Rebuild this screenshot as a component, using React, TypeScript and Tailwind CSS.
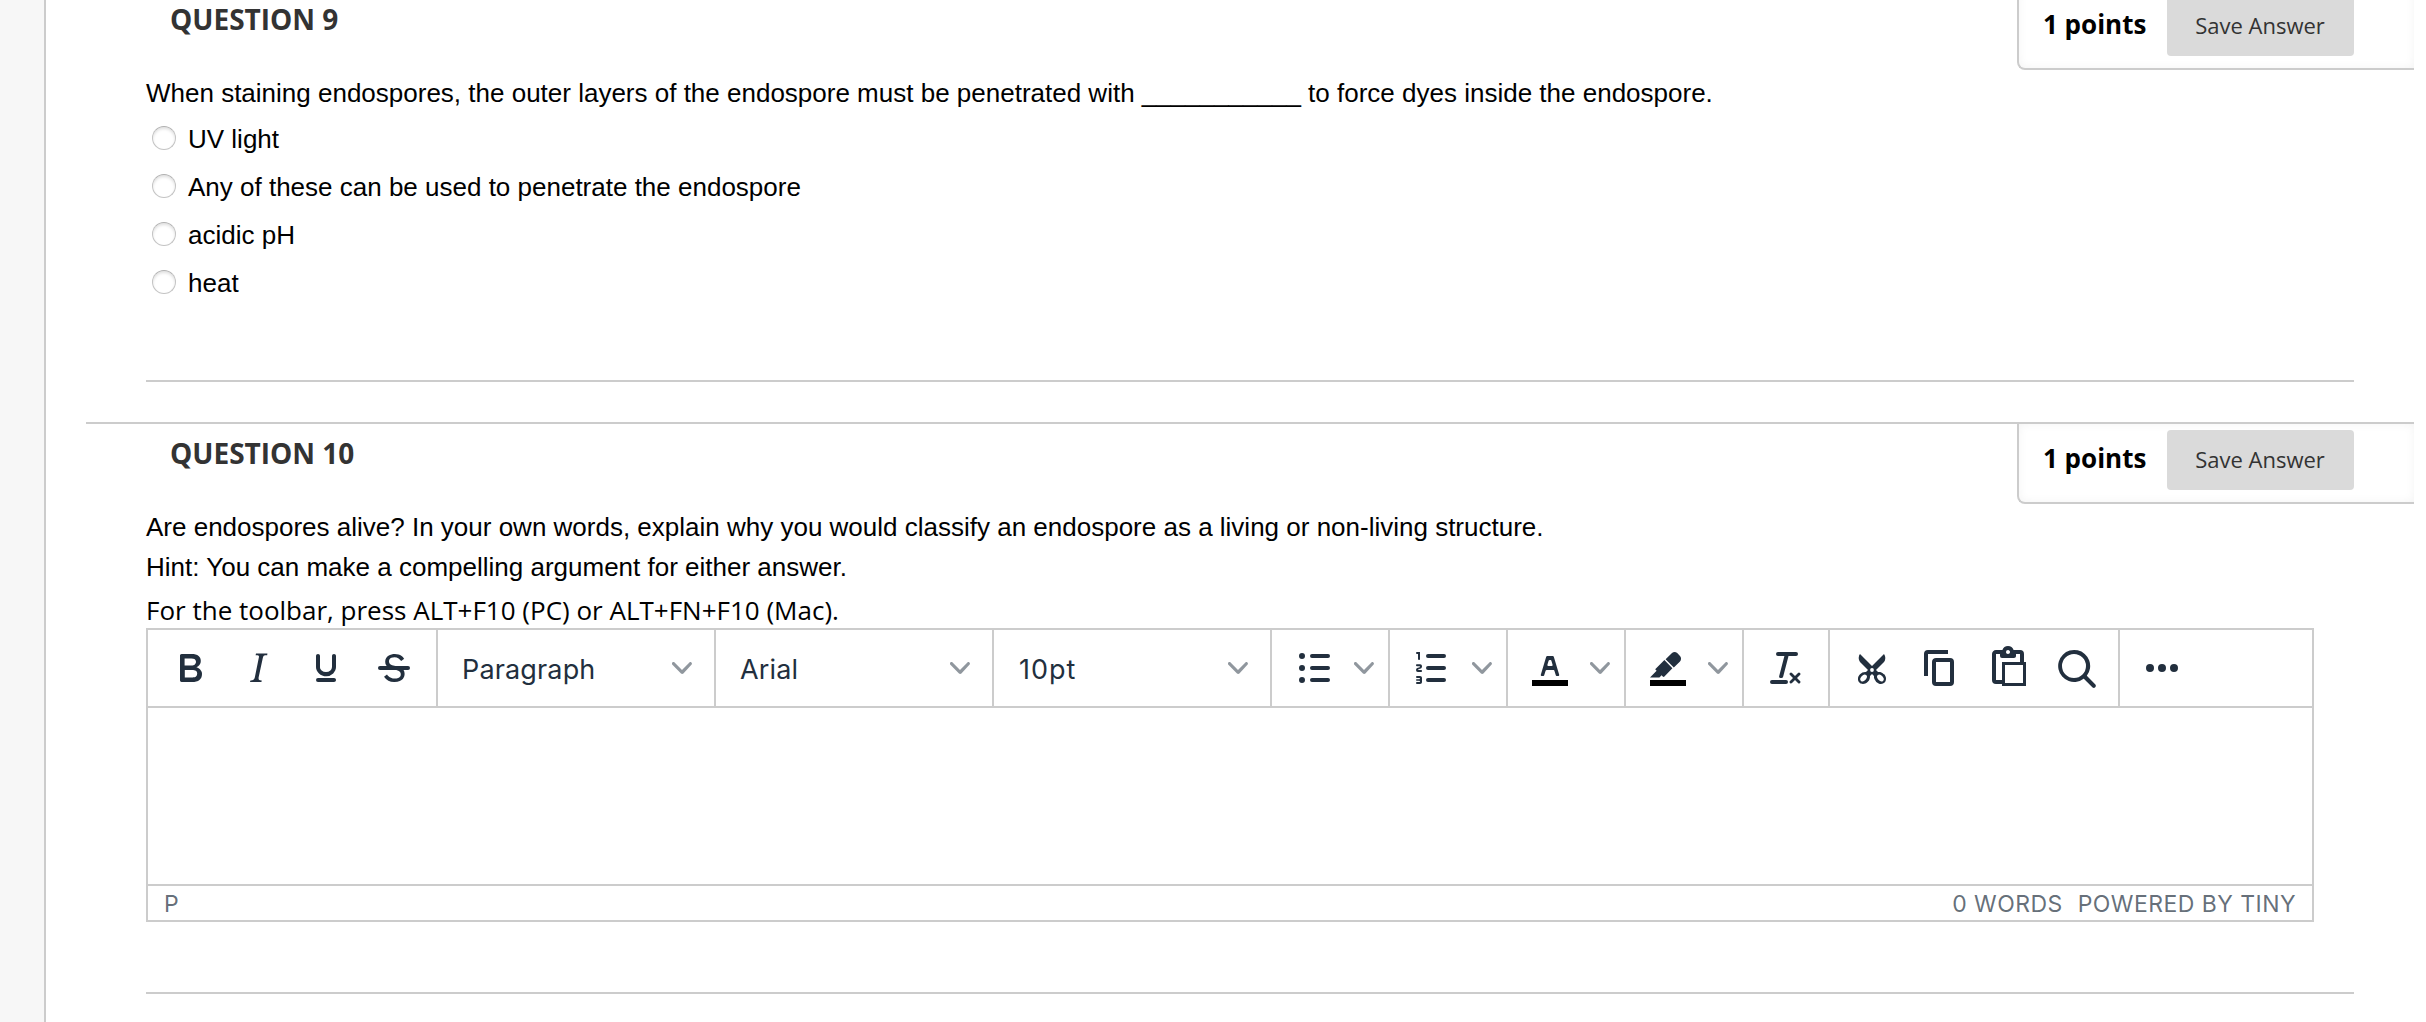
import React, { ReactNode } from 'react';

const ICONS = {
  bold: 'M7.8 19c-.3 0-.5 0-.6-.2l-.2-.5V5.7c0-.2 0-.4.2-.5l.6-.2h5c1.5 0 2.7.3 3.5 1 .7.6 1.1 1.4 1.1 2.5a3 3 0 0 1-.6 1.9c-.4.6-1 1-1.6 1.2.4.1.9.3 1.3.6s.8.7 1 1.2c.4.4.5 1 .5 1.6 0 1.3-.4 2.3-1.3 3-.8.7-2.1 1-3.8 1H7.8Zm5-8.3c.6 0 1.2-.1 1.6-.5.4-.3.6-.7.6-1.3 0-1.1-.8-1.7-2.3-1.7H9.3v3.5h3.4Zm.5 6c.7 0 1.3-.1 1.7-.4.4-.4.6-.9.6-1.5s-.2-1-.7-1.4c-.4-.3-1-.4-2-.4H9.4v3.8h4Z',
  italic: 'm16.7 4.7-.1.9h-.3c-.6 0-1 0-1.4.3-.3.3-.4.6-.5 1.1l-2.1 9.8v.6c0 .5.4.8 1.4.8h.2l-.2.8H8l.2-.8h.2c1.1 0 1.8-.5 2-1.5l2-9.8.1-.5c0-.6-.4-.8-1.4-.8h-.3l.2-.9h5.8Z',
  underline: 'M16 5c.6 0 1 .4 1 1v5.5a4 4 0 0 1-.4 1.8l-1 1.4a5.3 5.3 0 0 1-5.5 1 5 5 0 0 1-1.6-1c-.5-.4-.8-.9-1.1-1.4a4 4 0 0 1-.4-1.8V6c0-.6.4-1 1-1s1 .4 1 1v5.5c0 .3 0 .6.2 1l.6.7a3.3 3.3 0 0 0 2.2.8 3.4 3.4 0 0 0 2.2-.8c.3-.2.4-.5.6-.8l.2-.9V6c0-.6.4-1 1-1ZM8 17h8c.6 0 1 .4 1 1s-.4 1-1 1H8a1 1 0 0 1 0-2Z',
  removeFormat: 'M13.2 6a1 1 0 0 1 0 .2l-2.6 10a1 1 0 0 1-1 .8h-.2a.8.8 0 0 1-.8-1l2.6-10H8a1 1 0 1 1 0-2h9a1 1 0 0 1 0 2h-3.8ZM5 18h7a1 1 0 0 1 0 2H5a1 1 0 0 1 0-2Zm13 1.5L16.5 18 15 19.5a.7.7 0 0 1-1-1l1.5-1.5-1.5-1.5a.7.7 0 0 1 1-1l1.5 1.5 1.5-1.5a.7.7 0 0 1 1 1L17.5 17l1.5 1.5a.7.7 0 0 1-1 1Z',
  copy: 'M16 3H6a2 2 0 0 0-2 2v11h2V5h10V3Zm1 4a2 2 0 0 1 2 2v10a2 2 0 0 1-2 2h-7a2 2 0 0 1-2-2V9c0-1.2.9-2 2-2h7Zm0 12V9h-7v10h7Z',
  paste: 'M18 9V5h-2v1c0 .6-.4 1-1 1H9a1 1 0 0 1-1-1V5H6v13h3V9h9ZM9 20H6a2 2 0 0 1-2-2V5c0-1.1.9-2 2-2h3.2A3 3 0 0 1 12 1a3 3 0 0 1 2.8 2H18a2 2 0 0 1 2 2v4h1v12H9v-1Zm1.5-9.5v9h9v-9h-9ZM12 3a1 1 0 0 0-1 1c0 .5.4 1 1 1s1-.5 1-1-.4-1-1-1Z',
  search: 'M16 17.3a8 8 0 1 1 1.4-1.4l4.3 4.4a1 1 0 0 1-1.4 1.4l-4.4-4.3Zm-5-.3a6 6 0 1 0 0-12 6 6 0 0 0 0 12Z',
  more: 'M6 10a2 2 0 1 0 0 4 2 2 0 0 0 0-4Zm12 0a2 2 0 1 0 0 4 2 2 0 0 0 0-4Zm-6 0a2 2 0 1 0 0 4 2 2 0 0 0 0-4Z',
  bullets: 'M11 5h8a1 1 0 0 1 0 2h-8a1 1 0 0 1 0-2Zm0 6h8a1 1 0 0 1 0 2h-8a1 1 0 0 1 0-2Zm0 6h8a1 1 0 0 1 0 2h-8a1 1 0 0 1 0-2ZM4.5 6a1.5 1.5 0 1 1 3 0 1.5 1.5 0 0 1-3 0Zm0 6a1.5 1.5 0 1 1 3 0 1.5 1.5 0 0 1-3 0Zm0 6a1.5 1.5 0 1 1 3 0 1.5 1.5 0 0 1-3 0Z',
  numbers: 'M10 17h8a1 1 0 0 1 0 2h-8a1 1 0 0 1 0-2Zm0-6h8a1 1 0 0 1 0 2h-8a1 1 0 0 1 0-2Zm0-6h8a1 1 0 0 1 0 2h-8a1 1 0 1 1 0-2ZM6 4v3.5c0 .3-.2.5-.5.5a.5.5 0 0 1-.5-.5V5h-.5a.5.5 0 0 1 0-1H6Zm-1 8.8.2.2h1.3c.3 0 .5.2.5.5s-.2.5-.5.5H4.9a1 1 0 0 1-.9-1V13c0-.4.3-.8.6-1l1.2-.4.2-.3a.2.2 0 0 0-.2-.2H4.5a.5.5 0 0 1-.5-.5c0-.3.2-.5.5-.5h1.6c.5 0 .9.4.9 1v.1c0 .4-.3.8-.6 1l-1.2.4-.2.3ZM7 17v2c0 .6-.4 1-1 1H4.5a.5.5 0 0 1 0-1h1.2c.2 0 .3-.1.3-.3 0-.2-.1-.3-.3-.3H4.4a.4.4 0 1 1 0-.8h1.3c.2 0 .3-.1.3-.3 0-.2-.1-.3-.3-.3H4.5a.5.5 0 1 1 0-1H6c.6 0 1 .4 1 1Z',
};

function Icon({ d, children }: { d?: string; children?: ReactNode }) {
  return (
    <svg viewBox="0 0 24 24" className="h-12 w-12 shrink-0 fill-[#222f3e]">
      {d && <path d={d} fillRule="evenodd" />}
      {children}
    </svg>
  );
}

function Chevron() {
  return (
    <svg viewBox="0 0 10 10" className="h-5 w-5 shrink-0 fill-[#222f3e]/50">
      <path d="M8.7 2.2c.3-.3.8-.3 1 0 .4.4.4.9 0 1.2L5.7 7.8c-.3.3-.9.3-1.2 0L.2 3.4a.8.8 0 0 1 0-1.2c.3-.3.8-.3 1.1 0L5 6l3.7-3.8Z" />
    </svg>
  );
}

function Group({ children, last }: { children: ReactNode; last?: boolean }) {
  return (
    <div className={`flex h-full shrink-0 items-center px-2 ${last ? '' : 'border-r-2 border-[#ccc]'}`}>
      {children}
    </div>
  );
}

function ToolButton({ children }: { children: ReactNode }) {
  return <button className="flex h-17 w-[68px] items-center justify-center">{children}</button>;
}

function SplitButton({ children }: { children: ReactNode }) {
  return (
    <Group>
      <ToolButton>{children}</ToolButton>
      <button className="flex h-17 w-8 items-center justify-center">
        <Chevron />
      </button>
    </Group>
  );
}

function Select({ label, wide }: { label: string; wide?: boolean }) {
  return (
    <Group>
      <button className="flex h-17 w-[260px] items-center justify-between pr-3.5 pl-4 text-[27px] text-[#222f3e]">
        <span className={`pt-1 ${wide ? 'pl-px tracking-[1px]' : 'tracking-[0.15px]'}`}>{label}</span>
        <Chevron />
      </button>
    </Group>
  );
}

function Editor() {
  return (
    <div className="mr-[40px] flex h-[294px] flex-col border-2 border-[#ccc] font-['Inter',sans-serif]">
      <div className="flex h-[78px] shrink-0 items-center border-b-2 border-[#ccc]">
        <Group>
          <ToolButton><Icon d={ICONS.bold} /></ToolButton>
          <ToolButton><Icon d={ICONS.italic} /></ToolButton>
          <ToolButton><Icon d={ICONS.underline} /></ToolButton>
          <ToolButton>
            <Icon>
              <path d="M15.6 8.5c-.5-.7-1-1.1-1.3-1.3-.6-.4-1.3-.6-2-.6-2.7 0-2.8 1.7-2.8 2.1 0 1.6 1.8 2 3.2 2.3 4.4.9 4.6 2.8 4.6 3.9 0 1.4-.7 4.1-5 4.1A6.2 6.2 0 0 1 7 16.4l1.5-1.1c.4.6 1.6 2 3.7 2 1.6 0 2.5-.4 3-1.2.4-.8.3-2-.8-2.6-.7-.4-1.6-.7-2.9-1-1-.2-3.9-.8-3.9-3.6C7.6 6 10.3 5 12.4 5c2.9 0 4.2 1.6 4.7 2.4l-1.5 1.1Z" />
              <path d="M5 11h14a1 1 0 0 1 0 2H5a1 1 0 0 1 0-2Z" />
            </Icon>
          </ToolButton>
        </Group>
        <Select label="Paragraph" />
        <Select label="Arial" />
        <Select label="10pt" wide />
        <SplitButton><Icon d={ICONS.bullets} /></SplitButton>
        <SplitButton><Icon d={ICONS.numbers} /></SplitButton>
        <SplitButton>
          <Icon>
            <path d="M3 18h18v3H3z" className="fill-black" />
            <path d="M8.7 16h-.8a.5.5 0 0 1-.5-.6l2.7-9c.1-.3.3-.4.5-.4h2.8c.2 0 .4.1.5.4l2.7 9a.5.5 0 0 1-.5.6h-.8a.5.5 0 0 1-.4-.4l-.7-2.2c0-.3-.3-.4-.5-.4h-3.4c-.2 0-.4.1-.5.4l-.7 2.2c0 .3-.2.4-.4.4Zm2.6-7.6-.6 2a.5.5 0 0 0 .5.6h1.6a.5.5 0 0 0 .5-.6l-.6-2c0-.3-.3-.4-.5-.4h-.4c-.2 0-.4.1-.5.4Z" />
          </Icon>
        </SplitButton>
        <SplitButton>
          <Icon>
            <path d="M3 18h18v3H3z" className="fill-black" />
            <path d="M7.7 16.7H3l3.3-3.3-.7-.8L10.2 8l4 4.1-4 4.2c-.2.2-.6.2-.8 0l-.6-.7-1.1 1.1Zm7.2-5L10.8 7.6l3.2-3.1a2 2 0 0 1 2.6 0L18 6c.7.7.7 2 0 2.7l-3.1 3Z" />
          </Icon>
        </SplitButton>
        <Group>
          <ToolButton><Icon d={ICONS.removeFormat} /></ToolButton>
        </Group>
        <Group>
          <ToolButton>
            <Icon>
              <path d="M18 15c.6.7 1 1.4 1 2.3 0 .8-.2 1.5-.7 2l-.8.5-1 .2c-.4 0-.8 0-1.2-.3a3.9 3.9 0 0 1-2.1-2.2c-.2-.5-.3-1-.2-1.5l-1-1-1 1c0 .5 0 1-.2 1.5-.1.5-.4 1-.9 1.4-.3.4-.7.6-1.2.8l-1.2.3c-.4 0-.7 0-1-.2-.3 0-.6-.3-.8-.5-.5-.5-.8-1.2-.7-2 0-.9.4-1.6 1-2.2A3.7 3.7 0 0 1 8.6 14H9l1-1-4-4-.5-1a3.3 3.3 0 0 1 0-2c0-.4.3-.7.5-1l6 6 6-6 .5 1a3.3 3.3 0 0 1 0 2c0 .4-.3.7-.5 1l-4 4 1 1h.5c.4 0 .8 0 1.2.3.5.2.9.4 1.2.8Z" />
              <g className="fill-white">
                <ellipse cx="7.8" cy="17" rx="1.3" ry="1.95" transform="rotate(42 7.8 17)" />
                <ellipse cx="16.2" cy="17" rx="1.3" ry="1.95" transform="rotate(-42 16.2 17)" />
                <circle cx="12" cy="13" r=".95" />
              </g>
            </Icon>
          </ToolButton>
          <ToolButton><Icon d={ICONS.copy} /></ToolButton>
          <ToolButton><Icon d={ICONS.paste} /></ToolButton>
          <ToolButton><Icon d={ICONS.search} /></ToolButton>
        </Group>
        <Group last>
          <ToolButton><Icon d={ICONS.more} /></ToolButton>
        </Group>
      </div>
      <div className="flex-1" />
      <div className="flex h-9 shrink-0 items-center gap-[15px] border-t-2 border-[#ccc] px-4 pt-px text-[23px] leading-[34px] tracking-[0.45px] text-[#222f3e]/70">
        <span className="mr-auto">P</span>
        <span>0 WORDS</span>
        <span>POWERED BY TINY</span>
      </div>
    </div>
  );
}

function Question({ number, children }: { number: number; children: ReactNode }) {
  return (
    <section className="h-[434px] shrink-0 border-t-2 border-[#ccc]">
      <header className="flex h-20 justify-between pl-[84px]">
        <h3 className="text-[28px] leading-[58px] font-bold text-[#333]">QUESTION {number}</h3>
        <div className="flex h-20 w-[397px] items-start justify-between rounded-bl-lg border-b-2 border-l-2 border-[#ccc] pt-1.5 pr-[60px] pl-6 shadow-[inset_0_0_10px_rgba(0,0,0,0.05)]">
          <span className="text-[26px] leading-14 font-bold text-black">1 points</span>
          <button className="h-[60px] w-[187px] rounded bg-[#dadada] pr-px pb-0.5 text-[22px] text-[#333]">Save Answer</button>
        </div>
      </header>
      <div className="pr-[60px] pl-[60px]">{children}</div>
    </section>
  );
}

const options = ['UV light', 'Any of these can be used to penetrate the endospore', 'acidic pH', 'heat'];

export default function App() {
  return (
    <div className="flex h-[1022px] w-[2426px] overflow-hidden bg-white font-['Open_Sans',sans-serif] text-[26px] text-black">
      <aside className="w-[46px] shrink-0 border-r-2 border-[#ccc] bg-[#f7f7f7]" />
      <main className="-mt-3 flex flex-1 flex-col pr-3 pl-10">
        <Question number={9}>
          <p className="mt-[3px] font-['Liberation_Sans',sans-serif] leading-10">
            When staining endospores, the outer layers of the endospore must be penetrated with ___________ to force dyes inside the endospore.
          </p>
          <div className="mt-px">
            {options.map((option) => (
              <label key={option} className="flex h-12 items-center gap-3 pl-1.5 font-['Liberation_Sans',sans-serif]">
                <span className="h-6 w-6 shrink-0 rounded-full border border-[#c4c4c4] border-t-[#b0b0b0] bg-white shadow-[inset_0_2px_3px_rgba(0,0,0,0.12)]" />
                <span className="pt-0.5">{option}</span>
              </label>
            ))}
          </div>
          <div className="mt-[74px] h-0.5 bg-[#ccc]" />
        </Question>
        <Question number={10}>
          <div className="mt-[3px] font-['Liberation_Sans',sans-serif] leading-10">
            <p>Are endospores alive? In your own words, explain why you would classify an endospore as a living or non-living structure.</p>
            <p>Hint: You can make a compelling argument for either answer.</p>
          </div>
          <p className="mt-[5px] leading-9">For the toolbar, press ALT+F10 (PC) or ALT+FN+F10 (Mac).</p>
          <Editor />
          <div className="mt-[70px] h-0.5 bg-[#ccc]" />
        </Question>
      </main>
    </div>
  );
}
